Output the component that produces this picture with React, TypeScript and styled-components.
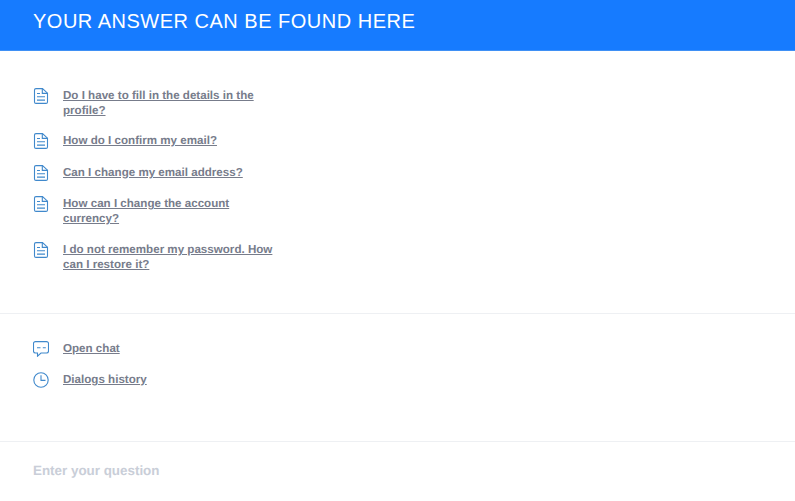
import { createGlobalStyle, styled } from 'styled-components';

const GlobalStyle = createGlobalStyle`
  html, body {
    margin: 0;
    padding: 0;
    background: #ffffff;
    font-family: 'Liberation Sans', Arial, sans-serif;
  }
`;

const Page = styled.div`
  width: 795px;
  height: 501px;
  overflow: hidden;
  background: #ffffff;
`;

const Header = styled.header`
  box-sizing: border-box;
  height: 51px;
  padding: 9px 33px 0;
  background: #167bff;
  border-bottom: 1px solid #3f90f5;
  color: #ffffff;
  font-size: 20px;
  line-height: 24px;
  letter-spacing: 0.5px;
`;

const Section = styled.section<{ $height: number; $top: number }>`
  box-sizing: border-box;
  height: ${(p) => p.$height}px;
  padding: ${(p) => p.$top}px 33px 0;
  border-bottom: 1px solid #eef0f3;
`;

const Item = styled.a`
  display: flex;
  width: 245px;
  gap: 14px;
  margin-bottom: 15.33px;
  cursor: pointer;
`;

const IconSlot = styled.span`
  flex: none;
  width: 16px;
  height: 16px;
  color: #4089cc;
`;

const Label = styled.span`
  color: #777c8b;
  font-size: 11.6px;
  font-weight: 700;
  line-height: 15.33px;
  text-decoration: underline;
  text-rendering: geometricPrecision;
`;

const Prompt = styled.div`
  padding: 21px 33px 0;
  color: #c9ced8;
  font-size: 13.4px;
  font-weight: 700;
  line-height: 16px;
  text-rendering: geometricPrecision;
`;

const DocIcon = () => (
  <svg width="16" height="16" viewBox="0 0 16 16" fill="none" stroke="currentColor" strokeWidth="1.1">
    <path d="M3 .6h6.500l5 4.600v8.700a1.500 1.500 0 0 1-1.500 1.500H3a1.500 1.500 0 0 1-1.500-1.500V2.100A1.500 1.500 0 0 1 3 .6z" />
    <path d="M9.300 .6v4.800h5.200M4 5.500h3M4 8.800h8M4 12.100h8" />
  </svg>
);

const ChatIcon = () => (
  <svg width="16" height="16" viewBox="0 0 16 16" fill="none" stroke="currentColor" strokeWidth="1.1">
    <path d="M2.500 .6h11a2 2 0 0 1 2 2v7.400a2 2 0 0 1-2 2H8l-3.500 3.200v-3.200h-2a2 2 0 0 1-2-2V2.600a2 2 0 0 1 2-2z" />
    <path d="M4 6.700h3.500M9.800 6.700h3" />
  </svg>
);

const ClockIcon = () => (
  <svg width="16" height="16" viewBox="0 0 16 16" fill="none" stroke="currentColor" strokeWidth="1.1">
    <circle cx="8" cy="8" r="7.200" />
    <path d="M8 3.200v5.200h4.500" />
  </svg>
);

const questions = [
  'Do I have to fill in the details in the profile?',
  'How do I confirm my email?',
  'Can I change my email address?',
  'How can I change the account currency?',
  'I do not remember my password. How can I restore it?',
];

const App = () => (
  <Page>
    <GlobalStyle />
    <Header>YOUR ANSWER CAN BE FOUND HERE</Header>
    <Section $height={263} $top={36.5}>
      {questions.map((q) => (
        <Item key={q}>
          <IconSlot>
            <DocIcon />
          </IconSlot>
          <Label>{q}</Label>
        </Item>
      ))}
    </Section>
    <Section $height={128} $top={27}>
      <Item>
        <IconSlot>
          <ChatIcon />
        </IconSlot>
        <Label>Open chat</Label>
      </Item>
      <Item>
        <IconSlot>
          <ClockIcon />
        </IconSlot>
        <Label>Dialogs history</Label>
      </Item>
    </Section>
    <Prompt>Enter your question</Prompt>
  </Page>
);

export default App;
